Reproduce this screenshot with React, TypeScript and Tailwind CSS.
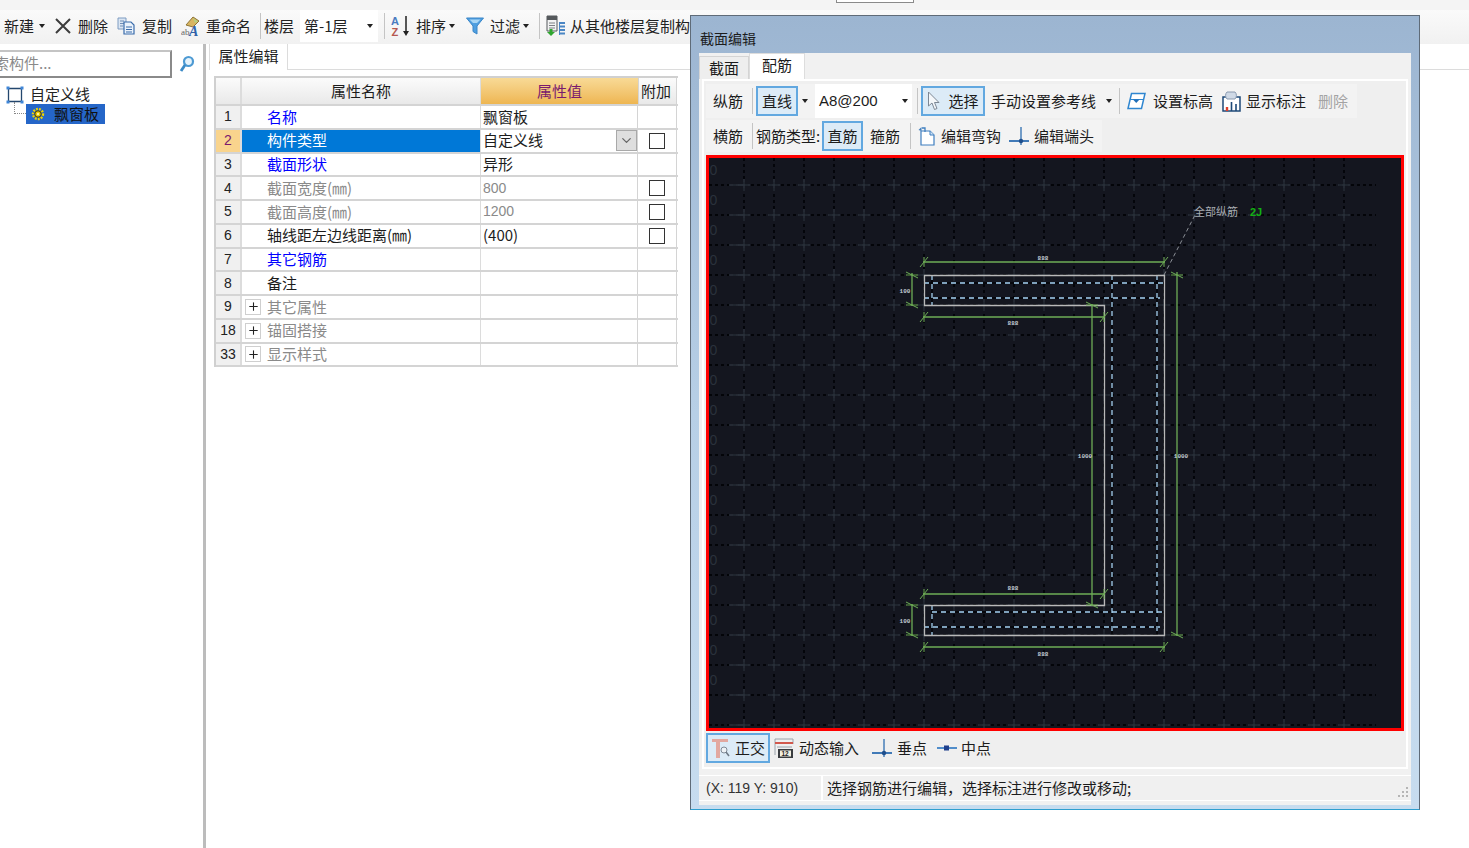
import type { ReactNode } from 'react';
import { Plus, ChevronDown } from 'lucide-react';

const rows = [
  { n: '1', name: '名称', tone: 'link', value: '飘窗板' },
  { n: '2', name: '构件类型', tone: 'sel', value: '自定义线', check: true, select: true },
  { n: '3', name: '截面形状', tone: 'link', value: '异形' },
  { n: '4', name: '截面宽度(㎜)', tone: 'mute', value: '800', check: true, valueMute: true },
  { n: '5', name: '截面高度(㎜)', tone: 'mute', value: '1200', check: true, valueMute: true },
  { n: '6', name: '轴线距左边线距离(㎜)', tone: 'plain', value: '(400)', check: true },
  { n: '7', name: '其它钢筋', tone: 'link', value: '' },
  { n: '8', name: '备注', tone: 'plain', value: '' },
  { n: '9', name: '其它属性', tone: 'group', value: '' },
  { n: '18', name: '锚固搭接', tone: 'group', value: '' },
  { n: '33', name: '显示样式', tone: 'group', value: '' },
];

function Caret() {
  return <span className="h-0 w-0 border-x-[3px] border-t-[4px] border-x-transparent border-t-[#222]" />;
}

function Sep() {
  return <span className="block h-[26px] w-px bg-[#c4c4c4]" />;
}

function DeleteIcon() {
  return (
    <svg width="16" height="16" viewBox="0 0 16 16">
      <path d="M1 1L15 15M15 1L1 15" stroke="#3c3c3c" strokeWidth="2" />
    </svg>
  );
}

function CopyIcon() {
  return (
    <svg width="18" height="18" viewBox="0 0 18 18">
      <path d="M1 1h8v11H1z" fill="#dbe6f3" stroke="#7f9cc2" />
      <path d="M3 4h4M3 6.500h4M3 9h3" stroke="#6f8db5" />
      <path d="M7 5h7l3 3v9H7z" fill="#eaf2fb" stroke="#3a6cab" strokeWidth="1.200" />
      <path d="M9 10h6M9 12.500h6M9 15h6" stroke="#3a6cab" />
    </svg>
  );
}

function RenameIcon() {
  return (
    <svg width="20" height="20" viewBox="0 0 20 20">
      <path d="M5 9l7-8 6 4-6 6z" fill="#d9b562" stroke="#8d7436" />
      <path d="M12 2l5 3.500-3 1.500z" fill="#b7cf7e" />
      <text x="0" y="19" fontSize="9" fill="#666" fontFamily="Liberation Serif, serif">ab</text>
      <text x="8" y="20" fontSize="14" fontWeight="700" fontStyle="italic" fill="#2f62a8" fontFamily="Liberation Serif, serif">A</text>
    </svg>
  );
}

function SortIcon() {
  return (
    <svg width="20" height="22" viewBox="0 0 20 22">
      <text x="0" y="10" fontSize="11" fontWeight="700" fill="#4a7cc0" fontFamily="Liberation Sans, sans-serif">A</text>
      <text x="0.500" y="21" fontSize="11" fontWeight="700" fill="#b5574f" fontFamily="Liberation Sans, sans-serif">Z</text>
      <path d="M15 1v17" stroke="#222" strokeWidth="1.500" />
      <path d="M12 16h6l-3 5z" fill="#222" />
    </svg>
  );
}

function FilterIcon() {
  return (
    <svg width="18" height="18" viewBox="0 0 18 18">
      <path d="M0.500 1h17l-6.500 8v8l-4-2.500V9z" fill="#4f9fe0" stroke="#3a86c8" />
      <path d="M3.500 2.500h11l-3.500 3.500H7z" fill="#a8d6f5" />
    </svg>
  );
}

function FloorCopyIcon() {
  return (
    <svg width="20" height="22" viewBox="0 0 20 22">
      <path d="M1 1h10v15H1z" fill="#f2f3f3" stroke="#55595c" />
      <path d="M1 1h10v4H1z" fill="#55595c" />
      <path d="M3 8h6M3 10.500h6M3 13h6" stroke="#7c8084" />
      <path d="M3.500 14h3v3h2.500l-4 4-4-4h2.500z" fill="#2fa52f" />
      <path d="M14 8h5M14 11.500h5M14 15h5M14 18.500h5" stroke="#4a86c4" strokeWidth="2" />
      <path d="M13.500 7v13" stroke="#4a86c4" />
    </svg>
  );
}

function SearchIcon() {
  return (
    <svg width="16" height="18" viewBox="0 0 16 18">
      <circle cx="9.500" cy="6.500" r="4.500" fill="#e6f3fb" stroke="#4d9ad3" strokeWidth="2.200" />
      <path d="M6 10l-4 6" stroke="#3b8ac6" strokeWidth="2.800" />
    </svg>
  );
}

function TreeRootIcon() {
  return (
    <svg width="18" height="18" viewBox="0 0 18 18">
      <path d="M2.500 2.500h13v13h-13z" fill="none" stroke="#24476e" strokeWidth="1.300" />
      <path d="M0.500 0.500h3v3h-3zM14.500 0.500h3v3h-3zM0.500 14.500h3v3h-3zM14.500 14.500h3v3h-3z" fill="#3f86d8" />
    </svg>
  );
}

function GearIcon() {
  return (
    <svg width="14" height="14" viewBox="0 0 14 14">
      <circle cx="7" cy="7" r="5" fill="none" stroke="#f2d500" strokeWidth="2.400" strokeDasharray="1.800 1.200" />
      <circle cx="7" cy="7" r="3.200" fill="#e8c400" stroke="#4a3d00" />
      <circle cx="7" cy="7" r="1.200" fill="#fff3a0" />
    </svg>
  );
}

function Cursor() {
  return (
    <svg width="14" height="20" viewBox="0 0 14 20">
      <path d="M1.500 1v14l3.500-3 2.500 6.500 2.500-1-2.500-6h4.500z" fill="#f4f7fa" stroke="#7d8794" />
    </svg>
  );
}

function ElevationIcon() {
  return (
    <svg width="19" height="18" viewBox="0 0 19 18">
      <path d="M4.500 1.500h13.500l-3.500 15H1z" fill="#fff" stroke="#2f86d0" strokeWidth="1.500" />
      <path d="M3 7.500h13" stroke="#2f86d0" />
      <path d="M6 7.500h6.500l-3.250 3.500z" fill="#1f6fb8" />
    </svg>
  );
}

function MarkIcon() {
  return (
    <svg width="19" height="21" viewBox="0 0 19 21">
      <path d="M1 6h17v14H1z" fill="#fff" stroke="#1f4a78" strokeWidth="1.500" />
      <path d="M5 8a5 5 0 0 1 0-7h8a5 5 0 0 1 0 7z" fill="#cfd9e6" stroke="#8a9ab0" />
      <path d="M5 20v-4" stroke="#e0402c" strokeWidth="2.400" />
      <path d="M9.500 20v-9M14 20v-7" stroke="#1f4a78" strokeWidth="1.600" />
    </svg>
  );
}

function HookIcon() {
  return (
    <svg width="19" height="20" viewBox="0 0 19 20">
      <path d="M4 5h9l4 4v10H4z" fill="#fff" stroke="#3f7fc0" strokeWidth="1.200" />
      <path d="M13 5v4h4" fill="#cfe3f5" stroke="#3f7fc0" />
      <path d="M8 6V2h-3" fill="none" stroke="#3f7fc0" strokeWidth="1.300" />
      <path d="M1.500 4l3-3v4z" fill="#3f7fc0" />
    </svg>
  );
}

function EndIcon() {
  return (
    <svg width="20" height="20" viewBox="0 0 20 20">
      <path d="M0 15h20" stroke="#2d6db0" strokeWidth="1.800" />
      <path d="M12 1v18" stroke="#2d6db0" strokeWidth="1.300" />
      <circle cx="12" cy="15" r="2.200" fill="#1f4e8c" />
    </svg>
  );
}

function OrthoIcon() {
  return (
    <svg width="20" height="22" viewBox="0 0 20 22">
      <path d="M1 2h16v3H9v16H5V5H1z" fill="#e2a8a0" />
      <circle cx="13" cy="13" r="3" fill="#eef2f6" stroke="#7f8a96" />
      <path d="M15 15l3 4" stroke="#6f7a86" strokeWidth="1.500" />
    </svg>
  );
}

function DynamicIcon() {
  return (
    <svg width="20" height="20" viewBox="0 0 20 20">
      <path d="M1 1h18M1 1v16M19 1v5" stroke="#9aa2aa" fill="none" />
      <path d="M1 5h18" stroke="#d2584c" strokeWidth="2" />
      <path d="M3 9h15" stroke="#9aa2aa" />
      <rect x="4" y="11" width="15" height="9" fill="#3a3d40" />
      <rect x="6" y="12.500" width="11" height="6" fill="#f3f0e2" />
      <text x="7.500" y="18" fontSize="6.500" fontWeight="700" fill="#222" fontFamily="Liberation Sans, sans-serif">12</text>
    </svg>
  );
}

function MidIcon() {
  return (
    <svg width="20" height="10" viewBox="0 0 20 10">
      <path d="M0 5h20" stroke="#3f82c6" strokeWidth="1.800" />
      <rect x="7" y="2.500" width="5" height="5" fill="#1f3f8c" />
    </svg>
  );
}

function ActiveBtn({ className, children }: { className: string; children: ReactNode }) {
  return (
    <div className={`flex h-[30px] items-center justify-center border-2 border-[#62a8e0] bg-[#dcebf7] ${className}`}>
      {children}
    </div>
  );
}

function SectionDrawing() {
  const vs = Array.from({ length: 21 }, (_, i) => 744 + i * 30);
  const hs = Array.from({ length: 19 }, (_, i) => 185 + i * 30);
  const zeros = Array.from({ length: 18 }, (_, i) => 175 + i * 30);
  const labels: [number, number, string][] = [
    [1043, 260, '888'], [1013, 325, '888'], [905, 293, '100'], [1085, 458, '1000'],
    [1181, 458, '1000'], [1013, 590, '888'], [905, 623, '100'], [1043, 656, '888'],
  ];
  const ticks: [number, number, boolean][] = [
    [924, 262, true], [1164, 262, true], [924, 317, true], [1104, 317, true],
    [924, 594, true], [1104, 594, true], [924, 647, true], [1164, 647, true],
    [912, 275, false], [912, 305, false], [912, 605, false], [912, 635, false],
    [1092, 305, false], [1092, 605, false], [1177, 275, false], [1177, 635, false],
  ];
  return (
    <svg viewBox="709 158 692 570" className="block h-[570px] w-[692px]">
      <rect x="709" y="158" width="692" height="570" fill="#14161f" />
      {hs.map((y) => (
        <path key={y} d={`M709 ${y}H1376`} stroke="#030408" strokeWidth="1.800" strokeDasharray="3 3" />
      ))}
      {vs.map((x) => (
        <path key={x} d={`M${x} 158V727`} stroke="#030408" strokeWidth="1.800" strokeDasharray="3 3" />
      ))}
      {hs.map((y) =>
        vs.map((x) => (
          <path key={`${x}-${y}`} d={`M${x - 6} ${y}H${x + 6}M${x} ${y - 6}V${y + 6}`} stroke="#2a313b" strokeWidth="1.500" />
        )),
      )}
      {hs.map((y) => (
        <path key={`s${y}`} d={`M729 ${y}H744`} stroke="#2a313b" strokeWidth="1.500" />
      ))}
      {zeros.map((y) => (
        <text key={y} x="709.500" y={y} fontSize="14" fill="#2a313b" fontFamily="Liberation Sans, sans-serif">0</text>
      ))}

      <path d="M1164 275L1195 215" stroke="#8b8f96" strokeWidth="1" strokeDasharray="4 3" />
      <text x="1194" y="216" fontSize="11" fill="#a8adb3" fontFamily="Noto Sans CJK SC, sans-serif">全部纵筋</text>
      <text x="1250" y="216" fontSize="11" fontWeight="700" fill="#12b012" fontFamily="Liberation Sans, sans-serif">2J</text>

      <path d="M924 283H1164M924 298H1160M932 275V305M1112 275V635M1157 275V635M932 612H1164M924 627H1160M932 605V635" stroke="#030408" strokeWidth="1.500" fill="none" />
      <path d="M924 283H1164M924 298H1160M932 275V305M1112 275V635M1157 275V635M932 612H1164M924 627H1160M932 605V635" stroke="#a8d4f5" strokeWidth="1.300" strokeDasharray="5 4" fill="none" />
      <path d="M924.500 275.500H1164.500V635.500H924.500V605.500H1104.500V305.500H924.500Z" fill="none" stroke="#b9b9b9" strokeWidth="1.300" />

      <path d="M923 262H1165M923 317H1105M923 594H1105M923 647H1165M912 273V306M912 604V636M1092 304V606M1177 272V636" stroke="#6ead57" strokeWidth="1.300" fill="none" />
      {ticks.map(([x, y, h]) => (
        <path key={`${x}-${y}`} d={h ? `M${x - 4} ${y + 5}L${x + 4} ${y - 5}M${x} ${y - 5}V${y + 5}` : `M${x - 6} ${y - 3}L${x + 6} ${y + 3}M${x - 6} ${y}H${x + 6}`} stroke="#6ead57" strokeWidth="1" />
      ))}
      {labels.map(([x, y, t]) => (
        <text key={`${x}-${y}`} x={x} y={y} textAnchor="middle" fontSize="6" fontWeight="700" fill="#c3ccd4" fontFamily="Liberation Mono, monospace">{t}</text>
      ))}
    </svg>
  );
}

function SectionWindow() {
  return (
    <div className="absolute left-[690px] top-[15px] flex h-[795px] w-[730px] flex-col border border-[#5f6b78] border-b-[#2f9fcf] bg-gradient-to-b from-[#9cb5d1] via-[#b7cfe6] to-[#c7dcef] px-[8px] pb-[4px] text-[15px] text-[#1c1c1c]">
      <div className="flex h-[37px] shrink-0 items-end pb-[8px] pl-[1px] text-[14px] leading-none">截面编辑</div>
      <div className="flex min-h-0 flex-1 flex-col bg-[#f1f1f1]">
        <div className="flex h-[26px] shrink-0 items-end">
          <div className="flex h-[23px] w-[50px] items-center justify-center border border-b-0 border-[#d4d4d4] bg-[#eeeeee] pt-[1px]">截面</div>
          <div className="flex h-[26px] w-[56px] items-start justify-center border border-b-0 border-[#dddddd] bg-white">配筋</div>
        </div>
        <div className="mx-[3px] flex h-[690px] shrink-0 flex-col border-2 border-white bg-[#efefef] px-[2px] pb-[2px] pt-[3px]">
          <div className="flex h-[34px] w-[651px] shrink-0 items-center bg-[#f3f3f3] pl-[7px]">
            <span className="w-[30px]">纵筋</span>
            <span className="ml-[9px]"><Sep /></span>
            <ActiveBtn className="ml-[3px] w-[42px]">直线</ActiveBtn>
            <span className="ml-[4px] flex w-[8px]"><Caret /></span>
            <div className="ml-[5px] flex h-[34px] w-[97px] items-center justify-between bg-white pl-[4px] pr-[4px] font-['Liberation_Sans',sans-serif]">
              <span>A8@200</span>
              <Caret />
            </div>
            <span className="ml-[5px]"><Sep /></span>
            <ActiveBtn className="ml-[3px] w-[64px] gap-[7px]"><Cursor />选择</ActiveBtn>
            <span className="ml-[6px] w-[106px] whitespace-nowrap">手动设置参考线</span>
            <span className="ml-[9px] flex w-[8px]"><Caret /></span>
            <span className="ml-[5px]"><Sep /></span>
            <span className="ml-[7px]"><ElevationIcon /></span>
            <span className="ml-[7px] w-[60px]">设置标高</span>
            <span className="ml-[9px]"><MarkIcon /></span>
            <span className="ml-[5px] w-[60px]">显示标注</span>
            <span className="ml-[12px] text-[#a3a3a3]">删除</span>
          </div>
          <div className="mt-[2px] flex h-[32px] w-[396px] shrink-0 items-center bg-[#f3f3f3] pl-[7px]">
            <span className="w-[30px]">横筋</span>
            <span className="ml-[9px]"><Sep /></span>
            <span className="ml-[3px] w-[63px] whitespace-nowrap">钢筋类型:</span>
            <ActiveBtn className="ml-[3px] w-[41px]">直筋</ActiveBtn>
            <span className="ml-[7px] w-[30px]">箍筋</span>
            <span className="ml-[10px]"><Sep /></span>
            <span className="ml-[6px]"><HookIcon /></span>
            <span className="ml-[5px] w-[60px]">编辑弯钩</span>
            <span className="ml-[8px]"><EndIcon /></span>
            <span className="ml-[5px] w-[60px]">编辑端头</span>
          </div>
          <div className="mt-[3px] shrink-0 border-[3px] border-[#ff0000]">
            <SectionDrawing />
          </div>
          <div className="mt-[1px] flex h-[32px] shrink-0 items-center">
            <ActiveBtn className="w-[64px] gap-[4px]"><OrthoIcon />正交</ActiveBtn>
            <span className="ml-[4px]"><DynamicIcon /></span>
            <span className="ml-[5px] w-[60px]">动态输入</span>
            <span className="ml-[13px]"><EndIcon /></span>
            <span className="ml-[5px] w-[30px]">垂点</span>
            <span className="ml-[10px]"><MidIcon /></span>
            <span className="ml-[4px] w-[30px]">中点</span>
          </div>
        </div>
        <div className="mt-[6px] flex h-[26px] shrink-0 items-center border-y border-white bg-[#f0f0f0]">
          <span className="w-[122px] pl-[7px] font-['Liberation_Sans',sans-serif] text-[14px] text-[#333]">(X: 119 Y: 910)</span>
          <span className="h-[24px] w-[2px] bg-white" />
          <span className="ml-[4px] flex-1 whitespace-nowrap">{'选择钢筋进行编辑\uFF0C选择标注进行修改或移动;'}</span>
          <div className="mr-[3px] grid grid-cols-3 gap-[2px] self-end pb-[3px]">
            <span /><span /><span className="size-[2px] bg-[#b5b5b5]" />
            <span /><span className="size-[2px] bg-[#b5b5b5]" /><span className="size-[2px] bg-[#b5b5b5]" />
            <span className="size-[2px] bg-[#b5b5b5]" /><span className="size-[2px] bg-[#b5b5b5]" /><span className="size-[2px] bg-[#b5b5b5]" />
          </div>
        </div>
      </div>
    </div>
  );
}

function PropertyTable() {
  return (
    <div className="mt-[6px] w-[464px] border-l-2 border-t-2 border-[#d0d0d0] text-[15px] text-[#1c1c1c]">
      <div className="flex h-[28px] border-b-2 border-[#d4d4d4]">
        <div className="w-[26px] border-r-2 border-[#dcdcdc] bg-gradient-to-b from-[#fbfbfb] to-[#e9e9e9]" />
        <div className="flex w-[239px] items-center justify-center border-r border-[#dcdcdc] bg-gradient-to-b from-[#fbfbfb] to-[#e9e9e9]">属性名称</div>
        <div className="flex w-[157px] items-center justify-center bg-gradient-to-b from-[#f8da96] to-[#eeb651] text-[#7a1a6e]">属性值</div>
        <div className="flex w-[39px] items-center justify-center border-x border-[#d4d4d4] bg-gradient-to-b from-[#fbfbfb] to-[#e9e9e9] pr-[3px]">附加</div>
      </div>
      {rows.map((row) => (
        <div key={row.n} className="flex h-[23.75px] border-b-2 border-[#d4d4d4]">
          <div className={`flex w-[26px] items-center justify-center border-r-2 border-[#dcdcdc] font-['Liberation_Sans',sans-serif] text-[14px] ${row.n === '2' ? 'bg-[#f9d48d] text-[#7a1a6e]' : 'bg-[#f0f0f0] text-[#222]'}`}>
            {row.n}
          </div>
          <div className={`flex w-[239px] items-center border-r border-[#dcdcdc] ${row.tone === 'sel' ? 'bg-[#0078d7] text-white' : ''}`}>
            {row.tone === 'group' ? (
              <span className="ml-[3px] flex size-[16px] items-center justify-center border border-[#cfcfcf] bg-white">
                <Plus size={13} strokeWidth={2} color="#222" />
              </span>
            ) : (
              <span className="ml-[3px] w-[16px]" />
            )}
            <span className={`ml-[6px] whitespace-nowrap ${row.tone === 'link' ? 'text-[#0000ff]' : row.tone === 'mute' || row.tone === 'group' ? 'text-[#8a8a8a]' : ''}`}>
              {row.name}
            </span>
          </div>
          <div className="flex w-[157px] items-center justify-between border-r border-[#d4d4d4]">
            <span className={`ml-[2px] ${row.valueMute ? "font-['Liberation_Sans',sans-serif] text-[14px] text-[#8a8a8a]" : ''}`}>{row.value}</span>
            {row.select && (
              <span className="flex h-[21px] w-[21px] items-center justify-center border border-[#a9a9a9] bg-[#dedede]">
                <ChevronDown size={15} color="#666" />
              </span>
            )}
          </div>
          <div className="flex w-[39px] items-center justify-center border-r border-[#d4d4d4]">
            {row.check && <span className="size-[16px] border border-[#333] bg-white" />}
          </div>
        </div>
      ))}
    </div>
  );
}

export default function App() {
  return (
    <div className="relative h-[848px] w-[1469px] overflow-hidden bg-white font-['Noto_Sans_CJK_SC','Noto_Sans',sans-serif] text-[15px] text-[#222]">
      <div className="h-[10px] bg-[#f4f4f4]">
        <div className="ml-[836px] h-[3px] w-[78px] border-x border-b border-[#8a8a8a] bg-white" />
      </div>
      <div className="flex h-[34px] items-center whitespace-nowrap bg-gradient-to-b from-[#fafafa] to-[#f1f1f1] pb-[2px] pl-[4px]">
        <span className="w-[32px]">新建</span>
        <span className="ml-[3px] flex w-[8px]"><Caret /></span>
        <span className="ml-[8px]"><DeleteIcon /></span>
        <span className="ml-[7px] w-[30px]">删除</span>
        <span className="ml-[9px]"><CopyIcon /></span>
        <span className="ml-[7px] w-[30px]">复制</span>
        <span className="ml-[9px]"><RenameIcon /></span>
        <span className="ml-[5px] w-[45px]">重命名</span>
        <span className="ml-[9px]"><Sep /></span>
        <span className="ml-[3px] w-[30px]">楼层</span>
        <div className="ml-[6px] flex h-[32px] w-[78px] items-center justify-between bg-white pl-[4px] pr-[5px]">
          <span>第-1层</span>
          <Caret />
        </div>
        <span className="ml-[6px]"><Sep /></span>
        <span className="ml-[6px]"><SortIcon /></span>
        <span className="ml-[5px] w-[30px]">排序</span>
        <span className="ml-[3px] flex w-[8px]"><Caret /></span>
        <span className="ml-[9px]"><FilterIcon /></span>
        <span className="ml-[6px] w-[30px]">过滤</span>
        <span className="ml-[3px] flex w-[8px]"><Caret /></span>
        <span className="ml-[8px]"><Sep /></span>
        <span className="ml-[6px]"><FloorCopyIcon /></span>
        <span className="ml-[4px]">从其他楼层复制构件</span>
      </div>
      <div className="flex h-[804px]">
        <div className="w-[203px] pt-[6px]">
          <div className="flex items-center">
            <div className="h-[28px] w-[172px] overflow-hidden whitespace-nowrap border-2 border-l-0 border-[#c4c4c4] border-b-[#8a8a8a] border-r-[#8a8a8a] text-[#8a8a8a]">
              <span className="-ml-[6px] block leading-[22px]">索构件...</span>
            </div>
            <span className="ml-[7px]"><SearchIcon /></span>
          </div>
          <div className="ml-[6px] mt-[7px] flex h-[19px] items-center">
            <TreeRootIcon />
            <span className="ml-[6px]">自定义线</span>
          </div>
          <div className="ml-[14px] flex h-[20px] items-center">
            <span className="h-[12px] w-[12px] -translate-y-[6px] border-b border-l border-dotted border-[#888]" />
            <div className="flex h-[20px] w-[79px] items-center bg-[#2566c8] pl-[5px] text-[#111]">
              <GearIcon />
              <span className="ml-[9px]">飘窗板</span>
            </div>
          </div>
        </div>
        <div className="w-[3px] bg-[#bcbcbc]" />
        <div className="min-w-0 flex-1 pl-[3px]">
          <div className="flex h-[26px] items-end border-b border-[#dcdcdc]">
            <div className="relative top-px flex h-[26px] w-[79px] items-center justify-center border-x border-[#dcdcdc] bg-white pb-[2px]">属性编辑</div>
          </div>
          <div className="pl-[5px]">
            <PropertyTable />
          </div>
        </div>
      </div>
      <SectionWindow />
    </div>
  );
}
